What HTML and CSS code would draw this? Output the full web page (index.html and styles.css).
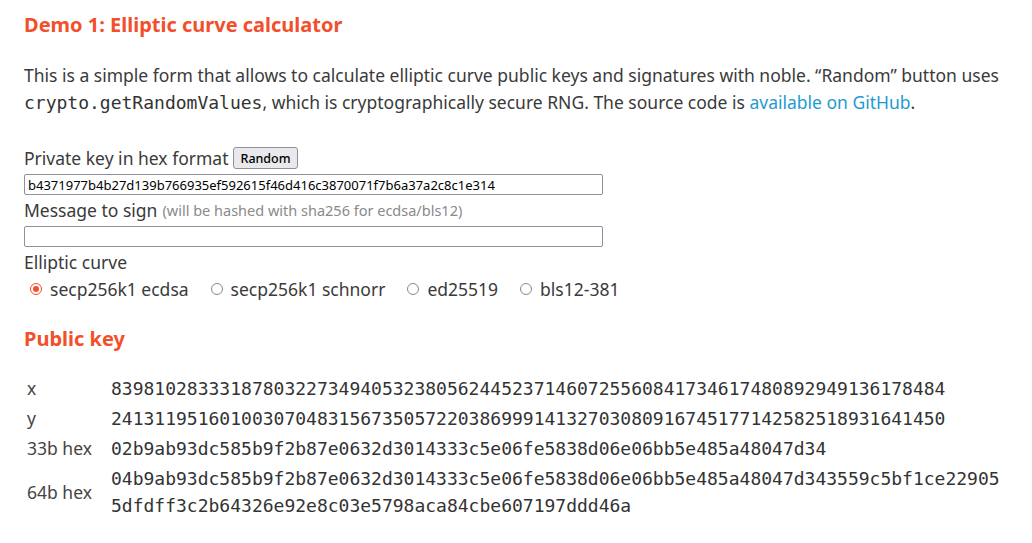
FILE: index.html
```html
<!DOCTYPE html>
<html>
<head>
<meta charset="utf-8">
<link rel="stylesheet" href="styles.css">
</head>
<body>
<div class="page">
  <h2 class="title">Demo 1: Elliptic curve calculator</h2>
  <p class="intro">This is a simple form that allows to calculate elliptic curve public keys and signatures with noble. “Random” button uses <code>crypto.getRandomValues</code>, which is cryptographically secure RNG. The source code is <a href="#">available on GitHub</a>.</p>
  <form class="form">
    <div class="label">Private key in hex format <button type="button" class="btn">Random</button></div>
    <input class="field" type="text" value="b4371977b4b27d139b766935ef592615f46d416c3870071f7b6a37a2c8c1e314">
    <div class="label">Message to sign <span class="hint">(will be hashed with sha256 for ecdsa/bls12)</span></div>
    <input class="field" type="text" value="">
    <div class="label">Elliptic curve</div>
    <div class="radios">
      <label class="opt"><input type="radio" name="c" checked><span>secp256k1 ecdsa</span></label>
      <label class="opt"><input type="radio" name="c"><span>secp256k1 schnorr</span></label>
      <label class="opt"><input type="radio" name="c"><span>ed25519</span></label>
      <label class="opt"><input type="radio" name="c"><span>bls12-381</span></label>
    </div>
  </form>
  <h2 class="title sub">Public key</h2>
  <table class="keys">
    <tr><td class="k">x</td><td class="v">83981028333187803227349405323805624452371460725560841734617480892949136178484</td></tr>
    <tr><td class="k">y</td><td class="v">24131195160100307048315673505722038699914132703080916745177142582518931641450</td></tr>
    <tr><td class="k">33b hex</td><td class="v">02b9ab93dc585b9f2b87e0632d3014333c5e06fe5838d06e06bb5e485a48047d34</td></tr>
    <tr><td class="k">64b hex</td><td class="v">04b9ab93dc585b9f2b87e0632d3014333c5e06fe5838d06e06bb5e485a48047d343559c5bf1ce22905<br>5dfdff3c2b64326e92e8c03e5798aca84cbe607197ddd46a</td></tr>
  </table>
</div>
</body>
</html>
```

FILE: styles.css
```css
html, body {
  margin: 0;
  padding: 0;
  background: #fff;
}
body {
  font-family: "Noto Sans", "Open Sans", sans-serif;
  font-size: 17.5px;
  color: #3a3a3a;
}
.page {
  padding: 10px 24px 0 24px;
  width: 990px;
}
.title {
  font-family: "Noto Sans", sans-serif;
  font-weight: 700;
  font-size: 20px;
  line-height: 30px;
  color: #f2502b;
  margin: 0;
}
.intro {
  margin: 22px 0 0 0;
  line-height: 27px;
}
.intro code {
  font-family: "DejaVu Sans Mono", monospace;
  font-size: 18px;
  color: #333;
}
.intro a {
  color: #1e9bd0;
  text-decoration: none;
}
.form {
  margin-top: 27px;
}
.label {
  height: 30px;
  margin-bottom: 1px;
  display: flex;
  align-items: center;
  gap: 5px;
}
.btn {
  font-family: "Noto Sans", sans-serif;
  font-size: 12.5px;
  font-weight: 500;
  padding: 0 6px;
  height: 22px;
  border: 1px solid #8f8f9d;
  border-radius: 3px;
  background: #e9e9ed;
  color: #000;
}
.hint {
  font-size: 14.5px;
  color: #8a8a8a;
}
.field {
  display: block;
  box-sizing: border-box;
  width: 579px;
  height: 21px;
  margin: 0;
  padding: 0 3px;
  border: 1px solid #8f8f9d;
  border-radius: 2px;
  font-family: "Noto Sans", sans-serif;
  font-size: 13px;
  color: #000;
}
.radios {
  display: flex;
  gap: 22px;
  height: 22px;
  align-items: center;
  padding-left: 6px;
}
.opt {
  display: flex;
  align-items: center;
  gap: 8px;
}
.opt input {
  appearance: none;
  margin: 0;
  width: 12px;
  height: 12px;
  border: 1px solid #888;
  border-radius: 50%;
  box-sizing: border-box;
  position: relative;
}
.opt input:checked {
  border: 1.5px solid #f2502b;
}
.opt input:checked::after {
  content: "";
  position: absolute;
  left: 1.5px;
  top: 1.5px;
  width: 6px;
  height: 6px;
  border-radius: 50%;
  background: #f2502b;
}
.sub {
  margin-top: 24px;
}
.keys {
  margin-top: 19px;
  border-collapse: collapse;
}
.keys td {
  padding: 1.5px 0;
  vertical-align: middle;
}
.k {
  width: 84px;
  padding-left: 3px !important;
  color: #444;
}
.v {
  font-family: "DejaVu Sans Mono", monospace;
  font-size: 18px;
  line-height: 27px;
  color: #333;
}
```
